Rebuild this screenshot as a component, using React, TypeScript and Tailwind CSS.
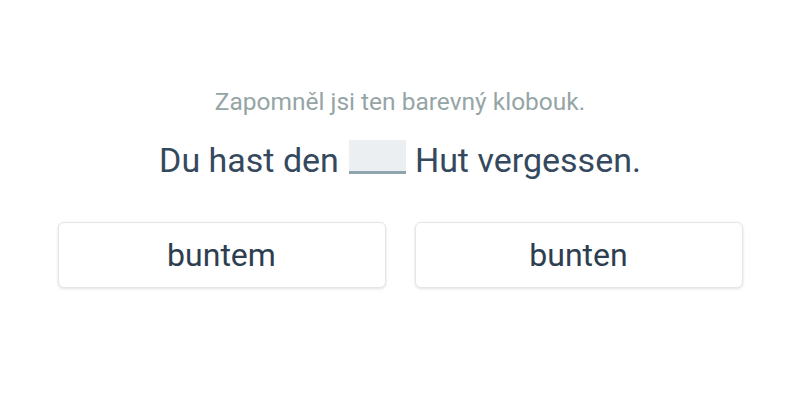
import React from 'react';

const OPTIONS = ['buntem', 'bunten'];

export default function App() {
  return (
    <div
      className="w-[800px] h-[400px] bg-white flex flex-col items-center pt-[86px]"
      style={{ fontFamily: 'Roboto, "Noto Sans", sans-serif' }}
    >
      <p className="text-[24.5px] leading-[32px] text-[#95a5a6]">Zapomněl jsi ten barevný klobouk.</p>
      <div className="mt-[22px] flex items-center text-[34px] leading-[40px] text-[#34495e]">
        <span>Du hast den</span>
        <span className="ml-[10px] mr-[9px] mb-[6px] inline-block w-[57px] h-[34px] bg-[#eceff1] border-b-[3px] border-[#90a4ae]" />
        <span>Hut vergessen.</span>
      </div>
      <div className="mt-[42px] grid grid-cols-2 gap-[29px] w-[685px]">
        {OPTIONS.map((opt) => (
          <button
            key={opt}
            className="h-[66px] rounded-[6px] bg-white border border-[#e3e6e8] shadow-[0_1px_3px_rgba(0,0,0,0.12)] text-[32px] text-[#2c3e50] flex items-center justify-center"
          >
            {opt}
          </button>
        ))}
      </div>
    </div>
  );
}
